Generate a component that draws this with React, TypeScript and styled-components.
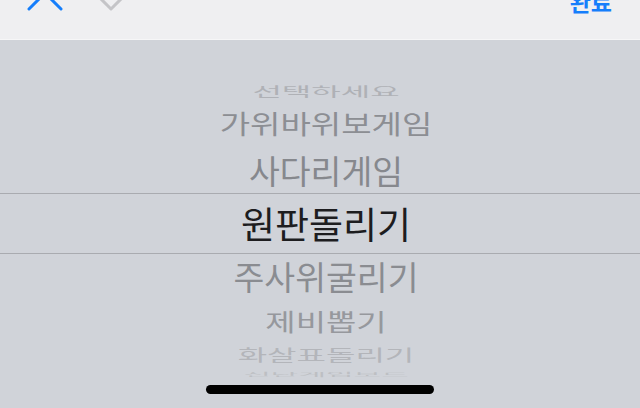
import { type FC } from "react";
import styled, { createGlobalStyle } from "styled-components";

const GlobalStyle = createGlobalStyle`
  html, body {
    margin: 0;
    padding: 0;
    background: #d0d3d9;
  }
  body {
    font-family: "Noto Sans CJK KR", "Noto Sans", sans-serif;
  }
`;

const Screen = styled.div`
  width: 640px;
  height: 408px;
  overflow: hidden;
  display: flex;
  flex-direction: column;
  background: #d0d3d9;
  position: relative;
`;

const Toolbar = styled.div`
  height: 39px;
  flex: none;
  background: #efeff1;
  border-bottom: 1px solid #f6f6f7;
  display: flex;
  align-items: flex-start;
  padding: 0 28px 0 26px;
  overflow: hidden;
`;

const NavGroup = styled.div`
  display: flex;
  gap: 28px;
  margin-top: -10px;
`;

const ChevronButton = styled.button`
  border: none;
  background: none;
  padding: 0;
  width: 38px;
  height: 22px;
  display: flex;
`;

const DoneButton = styled.button`
  margin-left: auto;
  margin-top: -10px;
  border: none;
  background: none;
  padding: 0;
  font-family: "Noto Sans CJK KR", sans-serif;
  font-size: 23px;
  line-height: 23px;
  font-weight: 600;
  color: #157efb;
`;

const Wheel = styled.div`
  flex: 1;
  position: relative;
  padding: 38px 0 0 12px;
`;

const SelectionBand = styled.div`
  position: absolute;
  left: 0;
  right: 0;
  top: 153px;
  height: 59px;
  border-top: 1px solid #a9abb0;
  border-bottom: 1px solid #a9abb0;
  pointer-events: none;
`;

const Row = styled.div<{ $h: number }>`
  height: ${({ $h }) => $h}px;
  display: flex;
  align-items: center;
  justify-content: center;
  overflow: visible;
`;

const Label = styled.span<{
  $size: number;
  $scale: number;
  $color: string;
  $shift?: number;
}>`
  display: block;
  font-size: ${({ $size }) => $size}px;
  line-height: 1;
  color: ${({ $color }) => $color};
  white-space: nowrap;
  transform: translateY(${({ $shift }) => $shift ?? 0}px)
    scaleY(${({ $scale }) => $scale});
`;

const HomeIndicator = styled.div`
  position: absolute;
  left: 206px;
  bottom: 14px;
  width: 228px;
  height: 9px;
  border-radius: 5px;
  background: #000;
`;

type Item = {
  text: string;
  h: number;
  size: number;
  scale: number;
  color: string;
  shift?: number;
};

const items: Item[] = [
  { text: "선택하세요", h: 28, size: 32, scale: 0.4, color: "#afb1b6", shift: -2 },
  { text: "가위바위보게임", h: 41, size: 33, scale: 0.8, color: "#8c8e93", shift: -3 },
  { text: "사다리게임", h: 46, size: 33.5, scale: 1, color: "#86888d" },
  { text: "원판돌리기", h: 60, size: 37, scale: 1, color: "#1d1d1f" },
  { text: "주사위굴리기", h: 46, size: 33.5, scale: 1, color: "#8a8c91" },
  { text: "제비뽑기", h: 41, size: 33, scale: 0.72, color: "#96989d", shift: 2 },
  { text: "화살표돌리기", h: 28, size: 32, scale: 0.5, color: "#b3b5ba" },
  { text: "신난게임보드", h: 8, size: 30, scale: 0.17, color: "#bdbfc3", shift: 2 },
];

const ChevronUp: FC = () => (
  <svg width="38" height="22" viewBox="0 0 38 22">
    <path
      d="M3 19 L19 3 L35 19"
      fill="none"
      stroke="#157efb"
      strokeWidth="3"
      strokeLinecap="round"
      strokeLinejoin="round"
    />
  </svg>
);

const ChevronDown: FC = () => (
  <svg width="38" height="22" viewBox="0 0 38 22">
    <path
      d="M3 3 L19 19 L35 3"
      fill="none"
      stroke="#c4c4c7"
      strokeWidth="3"
      strokeLinecap="round"
      strokeLinejoin="round"
    />
  </svg>
);

const App: FC = () => {
  return (
    <>
      <GlobalStyle />
      <Screen>
        <Toolbar>
          <NavGroup>
            <ChevronButton aria-label="이전">
              <ChevronUp />
            </ChevronButton>
            <ChevronButton aria-label="다음">
              <ChevronDown />
            </ChevronButton>
          </NavGroup>
          <DoneButton>완료</DoneButton>
        </Toolbar>
        <Wheel>
          <SelectionBand />
          {items.map((item) => (
            <Row key={item.text} $h={item.h}>
              <Label
                $size={item.size}
                $scale={item.scale}
                $color={item.color}
                $shift={item.shift}
              >
                {item.text}
              </Label>
            </Row>
          ))}
        </Wheel>
        <HomeIndicator />
      </Screen>
    </>
  );
};

export default App;
